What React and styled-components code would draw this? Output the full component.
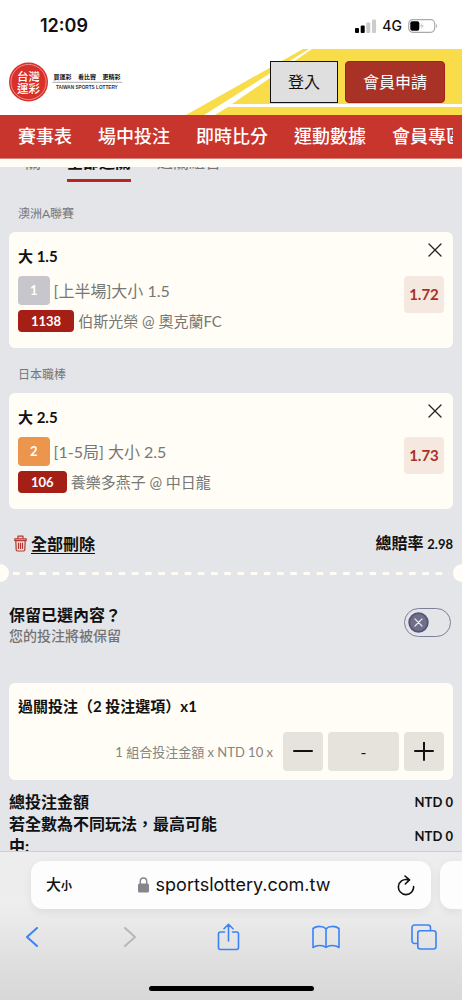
import React, { useState } from "react";
import styled, { createGlobalStyle } from "styled-components";

const cream = "#fffdf6";
const red = "#c8352c";
const darkRed = "#a51f16";
const grey = "#e4e5e8";
const blue = "#3b82f6";

const GlobalStyle = createGlobalStyle`
  *, *::before, *::after { box-sizing: border-box; }
  body {
    margin: 0;
    background: ${grey};
    color: #111;
    font: 400 16px/22px Lato, "Noto Sans CJK TC", sans-serif;
  }
  button, input { font: inherit; color: inherit; }
  button { margin: 0; padding: 0; border: 0; background: none; cursor: pointer; }
  h2, p, ul, dl, dd, dt { margin: 0; padding: 0; }
  svg { display: block; flex: none; }
`;

const Screen = styled.div`
  display: flex;
  flex-direction: column;
  height: 100vh;
  overflow: hidden;
`;

const StatusBar = styled.div`
  display: flex;
  justify-content: space-between;
  align-items: center;
  flex: none;
  height: 49px;
  padding: 2px 24px 0 40px;
  background: #fff;
  font-family: Inter, sans-serif;
`;

const Clock = styled.span`
  font-size: 18px;
  font-weight: 600;
`;

const StatusIcons = styled.div`
  display: flex;
  align-items: center;
  gap: 6px;
  font-size: 14px;
  font-weight: 500;
`;

const Header = styled.header`
  position: relative;
  display: flex;
  justify-content: space-between;
  align-items: center;
  flex: none;
  height: 66px;
  padding: 0 17px 0 9px;
  background: #fff;
`;

const Stripes = styled.svg`
  position: absolute;
  top: 0;
  right: 0;
`;

const HeaderActions = styled.div`
  position: relative;
  display: flex;
  gap: 7px;
`;

const HeaderButton = styled.button`
  height: 42px;
  padding: 0 17px;
  border: 1px solid ${(p) => (p.$primary ? darkRed : "#111")};
  border-radius: ${(p) => (p.$primary ? 4 : 0)}px;
  background: ${(p) => (p.$primary ? "#a83226" : "#dfdfdf")};
  color: ${(p) => (p.$primary ? "#fff" : "#111")};
`;

const Nav = styled.nav`
  flex: none;
  padding: 0 9px;
  background: ${red};
  border-bottom: 1px solid #dd8078;
`;

const NavList = styled.ul`
  display: flex;
  gap: 26px;
  padding-left: 9px;
  overflow: hidden;
  list-style: none;
`;

const NavLink = styled.a`
  display: block;
  color: #fff;
  font-size: 18px;
  font-weight: 500;
  line-height: 43px;
  white-space: nowrap;
  text-decoration: none;
`;

const Slip = styled.main`
  flex: 1;
  min-height: 0;
  overflow: hidden;
  padding: 0 9px;
  border-top: 8px solid ${cream};
`;

const Tabs = styled.div`
  display: flex;
  align-items: flex-end;
  gap: 26px;
  height: 15px;
  padding-left: 16px;
  overflow: hidden;
`;

const Tab = styled.button`
  flex: none;
  padding-bottom: 6px;
  border-bottom: 3px solid ${(p) => (p.$active ? "#b5271f" : "transparent")};
  color: ${(p) => (p.$active ? "#111" : "#777")};
  font-weight: ${(p) => (p.$active ? 700 : 400)};
`;

const League = styled.p`
  margin: ${(p) => (p.$first ? 23 : 18)}px 9px 9px;
  color: #75757a;
  font-size: 12px;
  line-height: 18px;
`;

const Card = styled.section`
  padding: 12px 9px 16px;
  border-radius: 6px;
  background: ${cream};
`;

const CardHead = styled.div`
  display: flex;
  justify-content: space-between;
  align-items: flex-start;
  margin-bottom: 8px;
`;

const CardTitle = styled.h2`
  font-size: 15px;
  font-weight: 700;
  line-height: 24px;
`;

const IconButton = styled.button`
  display: grid;
  place-items: center;
  width: ${(p) => p.$size}px;
  height: ${(p) => p.$size}px;
`;

const CloseButton = styled(IconButton)`
  margin-top: -4px;
`;

const BetBody = styled.div`
  display: flex;
  justify-content: space-between;
  align-items: flex-start;
`;

const Lines = styled.div`
  display: grid;
  gap: 5px;
`;

const Line = styled.div`
  display: flex;
  align-items: center;
  gap: 4px;
  color: #777774;
  font-size: ${(p) => (p.$teams ? 15 : 16)}px;
`;

const Tag = styled.span`
  padding: 0 ${(p) => (p.$tall ? 12 : 13)}px;
  border-radius: 4px;
  background: ${(p) => p.$color};
  color: #fff;
  font-size: 13px;
  font-weight: 700;
  line-height: ${(p) => (p.$tall ? 29 : 22)}px;
`;

const Odds = styled.strong`
  width: 40px;
  border-radius: 4px;
  background: #f5e8e0;
  color: #a83226;
  font-size: 15px;
  line-height: 37px;
  text-align: center;
`;

const Summary = styled.div`
  display: flex;
  justify-content: space-between;
  align-items: center;
  margin: 22px 0 8px;
  padding-left: 5px;
  line-height: 24px;
  font-weight: 700;
`;

const ClearButton = styled.button`
  display: flex;
  align-items: center;
  gap: 4px;
  text-decoration: underline;
  text-underline-offset: 3px;
`;

const Small = styled.span`
  font-size: 13px;
  font-weight: 700;
`;

const Tear = styled.div`
  display: flex;
  justify-content: space-between;
  align-items: center;
  gap: 4px;
  margin: 0 -18px;

  &::before, &::after {
    content: "";
    width: 18px;
    height: 18px;
    border-radius: 50%;
    background: ${cream};
  }
`;

const Dashes = styled.div`
  flex: 1;
  height: 3px;
  background: linear-gradient(90deg, ${cream} 52%, transparent 52%) 0 0 / calc(100% / 33) 3px;
`;

const KeepRow = styled.label`
  display: flex;
  justify-content: space-between;
  align-items: flex-start;
  margin: 22px 0 37px;
  padding-right: 2px;
`;

const KeepTitle = styled.span`
  display: block;
  font-weight: 700;
`;

const KeepNote = styled.span`
  display: block;
  color: #737376;
  font-size: 14px;
  font-weight: 500;
  line-height: 20px;
`;

const SwitchBox = styled.span`
  position: relative;
  display: flex;
  justify-content: ${(p) => (p.$on ? "flex-end" : "flex-start")};
  align-items: center;
  width: 47px;
  height: 29px;
  margin-top: 4px;
  padding: 0 3px;
  border: 1px solid #7f7e9a;
  border-radius: 15px;
`;

const SwitchInput = styled.input`
  position: absolute;
  inset: 0;
  width: 100%;
  height: 100%;
  margin: 0;
  opacity: 0;
`;

const StakeCard = styled(Card)`
  padding: 11px 9px 9px;
`;

const StakeRow = styled.div`
  display: flex;
  justify-content: flex-end;
  align-items: center;
  gap: 5px;
  margin-top: 14px;
`;

const StakeLabel = styled.label`
  margin-right: 5px;
  color: #858580;
  font-size: 13px;
`;

const StepButton = styled(IconButton)`
  width: 40px;
  border-radius: 4px;
  background: #e6e2dc;
`;

const StakeInput = styled.input`
  width: 71px;
  height: 39px;
  border: 0;
  border-radius: 4px;
  background: #e6e2dc;
  text-align: center;
`;

const Totals = styled.dl`
  padding-top: 10px;
  font-weight: 700;
`;

const TotalRow = styled.div`
  display: flex;
  justify-content: space-between;
  align-items: center;
`;

const TotalName = styled.dt`
  max-width: 212px;
`;

const BrowserBar = styled.footer`
  display: flex;
  flex-direction: column;
  flex: none;
  height: 149px;
  padding: 9px 0;
  border-top: 1px solid #cfcfd1;
  background: linear-gradient(#ededee, #eeeeee 35%, #dedddd 80%, #d9d8d8);
  overflow: hidden;
  font-family: Inter, "Noto Sans CJK TC", sans-serif;
`;

const AddressRow = styled.div`
  display: flex;
  gap: 9px;
  padding-left: 31px;
`;

const Address = styled.div`
  display: flex;
  justify-content: space-between;
  align-items: center;
  flex: 1;
  height: 48px;
  padding: 0 15px;
  border-radius: 12px;
  background: #fdfdfd;
  box-shadow: 0 3px 10px rgba(0, 0, 0, 0.07);
`;

const NextTab = styled.div`
  width: 22px;
  height: 48px;
  border-radius: 12px 0 0 12px;
  background: #fdfdfd;
  box-shadow: 0 3px 10px rgba(0, 0, 0, 0.07);
`;

const TextSize = styled.button`
  font-size: 15px;
  font-weight: 500;
`;

const SmallGlyph = styled.span`
  font-size: 11px;
  font-weight: 700;
`;

const Domain = styled.span`
  display: flex;
  align-items: center;
  gap: 7px;
  font-size: 18px;
`;

const Toolbar = styled.div`
  display: flex;
  justify-content: space-between;
  align-items: center;
  padding: 12px 22px 0 16px;
`;

const HomeIndicator = styled.div`
  width: 165px;
  height: 5px;
  margin: auto auto 0;
  border-radius: 3px;
  background: #000;
`;

function Stroke({ w, h, color, width = 2, children }) {
  return (
    <svg width={w} height={h} viewBox={`0 0 ${w} ${h}`} fill="none" stroke={color}
      strokeWidth={width} strokeLinecap="round" strokeLinejoin="round" aria-hidden="true">
      {children}
    </svg>
  );
}

function Logo() {
  return (
    <svg width="114" height="42" viewBox="0 0 114 42" role="img" aria-label="台灣運彩"
      fontFamily='"Noto Sans CJK TC", sans-serif' fontWeight="700">
      <circle cx="19.5" cy="21" r="19.5" fill="#d8302a" />
      <circle cx="19.5" cy="21" r="17.6" fill="none" stroke="#f4b5b0" strokeWidth="0.7" />
      <g fontSize="11.5" fontWeight="500" fill="#fff">
        <text x="8" y="19.5">台灣</text>
        <text x="8" y="31.5">運彩</text>
      </g>
      <g fontSize="6" fill="#111">
        <text x="44.5" y="17.5">買運彩</text>
        <text x="69" y="17.5">看比賽</text>
        <text x="93.5" y="17.5">更精彩</text>
      </g>
      <path d="M43.500 21.300h69.500" stroke="#888" strokeWidth="0.7" />
      <text x="47" y="27.800" fontSize="4.7" fill="#333" fontFamily='"Liberation Sans", sans-serif'>TAIWAN SPORTS LOTTERY</text>
    </svg>
  );
}

function Bet({ league, first, title, tag, tagColor, market, code, teams, odds }) {
  return (
    <>
      <League $first={first}>{league}</League>
      <Card>
        <CardHead>
          <CardTitle>{title}</CardTitle>
          <CloseButton $size={19} aria-label="移除">
            <Stroke w={14} h={14} color="#222" width={1.3}><path d="M1 1l12 12M13 1L1 13" /></Stroke>
          </CloseButton>
        </CardHead>
        <BetBody>
          <Lines>
            <Line><Tag $tall $color={tagColor}>{tag}</Tag>{market}</Line>
            <Line $teams><Tag $color={darkRed}>{code}</Tag>{teams}</Line>
          </Lines>
          <Odds>{odds}</Odds>
        </BetBody>
      </Card>
    </>
  );
}

export default function App() {
  const [keep, setKeep] = useState(false);
  const [stake, setStake] = useState(0);

  return (
    <Screen>
      <GlobalStyle />
      <StatusBar>
        <Clock>12:09</Clock>
        <StatusIcons>
          <svg width="21" height="14" viewBox="0 0 21 14" aria-hidden="true">
            <rect x="0" y="9" width="4" height="5" rx="1" fill="#000" />
            <rect x="5.700" y="6.500" width="4" height="7.500" rx="1" fill="#000" />
            <rect x="11.300" y="3.500" width="4" height="10.500" rx="1" fill="#ccc" />
            <rect x="17" y="0.500" width="4" height="13.500" rx="1" fill="#ccc" />
          </svg>
          <span>4G</span>
          <svg width="30" height="14" viewBox="0 0 30 14" aria-hidden="true">
            <rect x="0.700" y="0.700" width="26" height="12.600" rx="4" fill="none" stroke="#aaa" strokeWidth="1.2" />
            <rect x="2.300" y="2.300" width="9" height="9.400" rx="2" fill="#000" />
            <path d="M14.500 3.500l-3 4h2.200l-.7 3 3-4.200h-2.200z" fill="#ccc" />
            <path d="M28.200 5v4c1.300-.5 1.300-3.500 0-4z" fill="#aaa" />
          </svg>
        </StatusIcons>
      </StatusBar>

      <Header>
        <Stripes width="276" height="66" viewBox="0 0 276 66" aria-hidden="true">
          <path d="M117 0H276V66H0z" fill="#f9dc4a" />
          <path d="M18 66L118 3 123 0H126L46 55H276V58H42L29 66z" fill="#fff" />
        </Stripes>
        <Logo />
        <HeaderActions>
          <HeaderButton>登入</HeaderButton>
          <HeaderButton $primary>會員申請</HeaderButton>
        </HeaderActions>
      </Header>

      <Nav>
        <NavList>
          {["賽事表", "場中投注", "即時比分", "運動數據", "會員專區"].map((name) => (
            <li key={name}><NavLink href="#">{name}</NavLink></li>
          ))}
        </NavList>
      </Nav>

      <Slip>
        <Tabs>
          <Tab>關</Tab>
          <Tab $active>全部過關</Tab>
          <Tab>過關組合</Tab>
        </Tabs>

        <Bet first league="澳洲A聯賽" title="大 1.5" tag="1" tagColor="#c7c6cc"
          market="[上半場]大小 1.5" code="1138" teams="伯斯光榮 @ 奧克蘭FC" odds="1.72" />
        <Bet league="日本職棒" title="大 2.5" tag="2" tagColor="#eb954d"
          market="[1-5局] 大小 2.5" code="106" teams="養樂多燕子 @ 中日龍" odds="1.73" />

        <Summary>
          <ClearButton>
            <Stroke w={13} h={17} color="#b5372f" width={1.200}>
              <path d="M.8 3.800h11.400v1.800H.8zM4 3.500V1.200h5v2.300M1.800 5.800l.4 9c0 .8.5 1.200 1.200 1.200h6.200c.7 0 1.200-.4 1.200-1.200l.4-9M4.500 8v5.500M6.500 8v5.500M8.500 8v5.500" />
            </Stroke>
            全部刪除
          </ClearButton>
          <span>總賠率 <Small>2.98</Small></span>
        </Summary>

        <Tear><Dashes /></Tear>

        <KeepRow>
          <span>
            <KeepTitle>保留已選內容？</KeepTitle>
            <KeepNote>您的投注將被保留</KeepNote>
          </span>
          <SwitchBox $on={keep}>
            <svg width="21" height="21" viewBox="0 0 21 21" aria-hidden="true">
              <circle cx="10.500" cy="10.500" r="9.300" fill="#706f89" stroke="#54537a" strokeWidth="1.800" />
              <path d="M7 7l7 7M14 7l-7 7" stroke="#e8e8ee" strokeWidth="1.200" strokeLinecap="round" />
            </svg>
            <SwitchInput type="checkbox" checked={keep} onChange={(e) => setKeep(e.target.checked)} />
          </SwitchBox>
        </KeepRow>

        <StakeCard>
          <CardTitle>過關投注（2 投注選項）x1</CardTitle>
          <StakeRow>
            <StakeLabel htmlFor="stake">1 組合投注金額 x NTD 10 x</StakeLabel>
            <StepButton $size={39} aria-label="減少" onClick={() => setStake(Math.max(0, stake - 1))}>
              <Stroke w={20} h={20} color="#111"><path d="M1 9h18" /></Stroke>
            </StepButton>
            <StakeInput id="stake" inputMode="numeric" value={stake || "-"}
              onChange={(e) => setStake(Number(e.target.value) || 0)} />
            <StepButton $size={39} aria-label="增加" onClick={() => setStake(stake + 1)}>
              <Stroke w={20} h={20} color="#111"><path d="M1 9h18M10 0v18" /></Stroke>
            </StepButton>
          </StakeRow>
        </StakeCard>

        <Totals>
          <TotalRow>
            <TotalName>總投注金額</TotalName>
            <dd><Small>NTD 0</Small></dd>
          </TotalRow>
          <TotalRow>
            <TotalName>若全數為不同玩法，最高可能中:</TotalName>
            <dd><Small>NTD 0</Small></dd>
          </TotalRow>
        </Totals>
      </Slip>

      <BrowserBar>
        <AddressRow>
          <Address>
            <TextSize>大<SmallGlyph>小</SmallGlyph></TextSize>
            <Domain>
              <svg width="11" height="16" viewBox="0 0 11 16" aria-hidden="true">
                <rect x="0" y="6.500" width="11" height="9" rx="1.500" fill="#85858a" />
                <path d="M2.300 7V4.300c0-4.400 6.400-4.400 6.400 0V7" fill="none" stroke="#85858a" strokeWidth="1.400" />
              </svg>
              sportslottery.com.tw
            </Domain>
            <IconButton $size={20} aria-label="重新載入">
              <Stroke w={18} h={21} color="#111" width={1.600}>
                <path d="M10.500 4.600A7.600 7.600 0 1 0 16.600 11.500M8 1l4.500 3.900L8.300 9" />
              </Stroke>
            </IconButton>
          </Address>
          <NextTab />
        </AddressRow>
        <Toolbar>
          <IconButton $size={32} aria-label="上一頁">
            <Stroke w={12} h={20} color={blue}><path d="M11 1L1 10l10 9" /></Stroke>
          </IconButton>
          <IconButton $size={32} aria-label="下一頁" disabled>
            <Stroke w={12} h={20} color="#b7b7b9"><path d="M1 1l10 9-10 9" /></Stroke>
          </IconButton>
          <IconButton $size={32} aria-label="分享">
            <Stroke w={23} h={28} color={blue} width={1.600}>
              <path d="M7.500 9H3.500a2 2 0 0 0-2 2v13.500a2 2 0 0 0 2 2h16a2 2 0 0 0 2-2V11a2 2 0 0 0-2-2h-4M11.500 18V1.500M7 5.800l4.500-4.500L16 5.800" />
            </Stroke>
          </IconButton>
          <IconButton $size={32} aria-label="書籤">
            <Stroke w={28} h={24} color={blue} width={1.600}>
              <path d="M14 4v18.500M14 4C11.500.5 4.500.8 1 3.500v19c3.500-2.500 10-2.700 13 0 3-2.700 9.500-2.500 13 0v-19C23.500.8 16.500.5 14 4" />
            </Stroke>
          </IconButton>
          <IconButton $size={32} aria-label="分頁">
            <Stroke w={26} h={26} color={blue} width={1.600}>
              <path d="M19.500 6.500V3.500a2.500 2.500 0 0 0-2.500-2.500H3.500A2.500 2.500 0 0 0 1 3.500V17a2.500 2.500 0 0 0 2.500 2.500h3" />
              <rect x="6.800" y="6.800" width="18.200" height="18.200" rx="2.500" />
            </Stroke>
          </IconButton>
        </Toolbar>
        <HomeIndicator />
      </BrowserBar>
    </Screen>
  );
}
